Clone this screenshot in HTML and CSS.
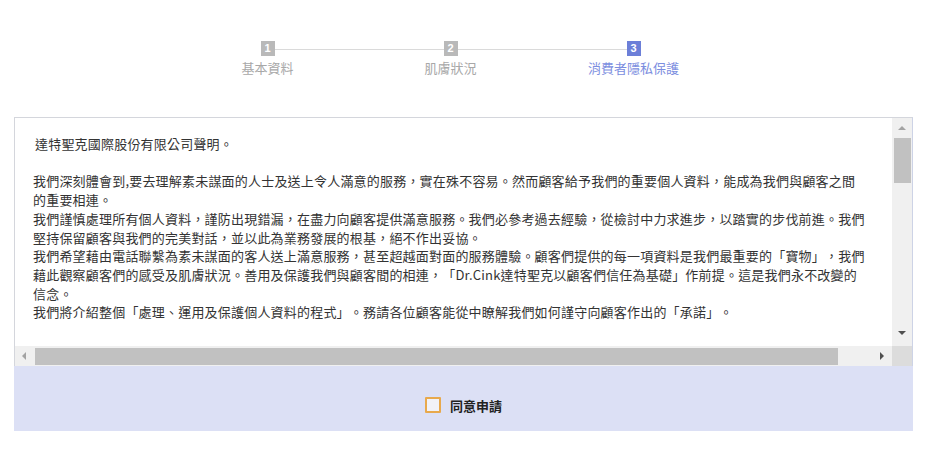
FILE: index.html
```html
<!DOCTYPE html>
<html lang="zh-Hant">

<head>
    <meta charset="UTF-8">
    <meta name="viewport" content="width=device-width, initial-scale=1.0">
    <title>消費者隱私保護</title>
    <link rel="stylesheet" href="styles.css">
</head>

<body>
    <ul class="steps">
        <li class="step"><span class="step_num">1</span><span class="step_label">基本資料</span></li>
        <li class="step"><span class="step_num">2</span><span class="step_label">肌膚狀況</span></li>
        <li class="step active"><span class="step_num">3</span><span class="step_label">消費者隱私保護</span></li>
    </ul>

    <div class="agree_box">
        <div class="scroll_box">
            <div class="terms">
                <p class="terms_title">達特聖克國際股份有限公司聲明。</p>
                <p class="blank"></p>
                <p>我們深刻體會到,要去理解素未謀面的人士及送上令人滿意的服務，實在殊不容易。然而顧客給予我們的重要個人資料，能成為我們與顧客之間<br>的重要相連。</p>
                <p>我們謹慎處理所有個人資料，謹防出現錯漏，在盡力向顧客提供滿意服務。我們必參考過去經驗，從檢討中力求進步，以踏實的步伐前進。我們<br>堅持保留顧客與我們的完美對話，並以此為業務發展的根基，絕不作出妥協。</p>
                <p>我們希望藉由電話聯繫為素未謀面的客人送上滿意服務，甚至超越面對面的服務體驗。顧客們提供的每一項資料是我們最重要的「寶物」，我們<br>藉此觀察顧客們的感受及肌膚狀況。善用及保護我們與顧客間的相連，「Dr.Cink達特聖克以顧客們信任為基礎」作前提。這是我們永不改變的<br>信念。</p>
                <p>我們將介紹整個「處理、運用及保護個人資料的程式」。務請各位顧客能從中瞭解我們如何謹守向顧客作出的「承諾」。</p>
            </div>
            <div class="vbar">
                <span class="bar_btn"><i class="arrow up"></i></span>
                <span class="vbar_thumb"></span>
                <span class="bar_btn down"><i class="arrow dn"></i></span>
            </div>
            <div class="hbar">
                <span class="bar_btn"><i class="arrow lt"></i></span>
                <span class="hbar_thumb"></span>
                <span class="bar_btn right"><i class="arrow rt"></i></span>
            </div>
            <div class="corner"></div>
        </div>
        <div class="agree_row">
            <label class="agree_check"><span class="check"></span><b>同意申請</b></label>
        </div>
    </div>
</body>

</html>
```
FILE: styles.css
```css
body {
    margin: 0;
    background: #fff;
    font-family: "Noto Sans CJK TC", "Noto Sans", sans-serif;
    color: #333;
}

/* 步驟條 */
.steps {
    list-style: none;
    margin: 41px 0 0 176px;
    padding: 0;
    width: 549px;
    display: flex;
    position: relative;
}

.steps::before {
    content: "";
    position: absolute;
    top: 8px;
    left: 98px;
    right: 98px;
    height: 1px;
    background: #dadada;
}

.step {
    width: 183px;
    display: flex;
    flex-direction: column;
    align-items: center;
}

.step_num {
    position: relative;
    z-index: 1;
    width: 14px;
    height: 15px;
    background: #b9b9b9;
    color: #fff;
    font-family: "Liberation Sans", sans-serif;
    font-size: 11px;
    font-weight: bold;
    line-height: 15px;
    text-align: center;
}

.step_label {
    margin-top: 3px;
    font-size: 13px;
    line-height: 17px;
    color: #a8a8a8;
}

.step.active .step_num {
    background: #6c7fd8;
}

.step.active .step_label {
    color: #7c8ee0;
}

/* 條款框 */
.agree_box {
    margin: 41px 0 0 14px;
    width: 899px;
}

.scroll_box {
    display: grid;
    grid-template-columns: 1fr 20px;
    grid-template-rows: 228px 20px;
    border: 1px solid #d4d6dc;
    border-bottom: 0;
    border-right-color: #cdd3e6;
}

.terms {
    padding: 17px 0 0 18px;
    overflow: hidden;
    white-space: nowrap;
    font-size: 13px;
    line-height: 18.7px;
    letter-spacing: 0.2px;
    text-spacing-trim: space-all;
    color: #333;
}

.terms p {
    margin: 0;
}

.terms .terms_title {
    text-indent: 2px;
}

.terms .blank {
    height: 18.7px;
}

.vbar {
    background: #f0f0f0;
    display: flex;
    flex-direction: column;
}

.bar_btn {
    width: 20px;
    height: 20px;
    display: flex;
    align-items: center;
    justify-content: center;
}

.vbar .down {
    margin-top: auto;
    height: 26px;
}

.vbar_thumb {
    width: 17px;
    height: 45px;
    margin-left: 2px;
    background: #c1c1c1;
}

.hbar {
    background: #f0f0f0;
    display: flex;
    align-items: center;
}

.hbar .bar_btn {
    width: 18px;
}

.hbar .right {
    margin-left: auto;
    width: 21px;
}

.hbar_thumb {
    width: 803px;
    height: 17px;
    margin-left: 2px;
    background: #c1c1c1;
}

.corner {
    background: #dcdcdc;
}

.arrow {
    width: 0;
    height: 0;
    border-style: solid;
    border-color: transparent;
}

.arrow.up {
    border-width: 0 4px 4px 4px;
    border-bottom-color: #a3a3a3;
}

.arrow.dn {
    border-width: 4px 4px 0 4px;
    border-top-color: #505050;
}

.arrow.lt {
    border-width: 4px 4px 4px 0;
    border-right-color: #a3a3a3;
}

.arrow.rt {
    border-width: 4px 0 4px 4px;
    border-left-color: #505050;
}

/* 同意 */
.agree_row {
    height: 65px;
    box-sizing: border-box;
    padding-top: 30px;
    background: #dce0f5;
    display: flex;
    justify-content: center;
}

.agree_check {
    display: flex;
    align-items: center;
    height: 18px;
    gap: 9px;
    font-size: 13px;
    color: #222;
}

.check {
    width: 12px;
    height: 12px;
    border: 2px solid #e8a94c;
    border-radius: 1px;
    background: #f2f2f7;
}
```
